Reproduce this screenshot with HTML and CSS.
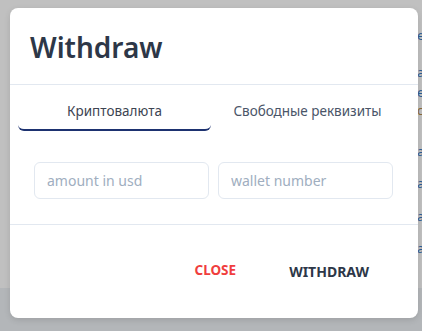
FILE: index.html
```html
<!DOCTYPE html>
<html lang="en">
<head>
<meta charset="utf-8">
<title>Withdraw</title>
<link rel="stylesheet" href="styles.css">
</head>
<body>
<div class="page">
  <div class="page-main">
    <div class="bg-lines">
      <span class="bg-line l1">ea</span>
      <span class="bg-line l2">ae</span>
      <span class="bg-line l3">ea</span>
      <span class="bg-line l4 alt">ca</span>
      <span class="bg-line l5">ae</span>
      <span class="bg-line l6">ae</span>
      <span class="bg-line l7">ae</span>
      <span class="bg-line l8">ae</span>
    </div>
  </div>
  <div class="page-footer"></div>
</div>

<div class="modal">
  <div class="modal-header">
    <h1 class="modal-title">Withdraw</h1>
  </div>
  <div class="tabs">
    <button class="tab active">Криптовалюта</button>
    <button class="tab">Свободные реквизиты</button>
  </div>
  <div class="fields">
    <input class="field" type="text" placeholder="amount in usd">
    <input class="field" type="text" placeholder="wallet number">
  </div>
  <div class="modal-footer">
    <button class="btn btn-close">CLOSE</button>
    <button class="btn btn-withdraw">WITHDRAW</button>
  </div>
</div>
</body>
</html>
```

FILE: styles.css
```css
html, body {
  margin: 0;
  padding: 0;
}
body {
  width: 422px;
  height: 331px;
  overflow: hidden;
  background: #c0c0c0;
  font-family: "Noto Sans", "Open Sans", sans-serif;
  position: relative;
}
.page {
  display: flex;
  flex-direction: column;
  height: 331px;
}
.page-main {
  height: 288px;
  background: #c0c0c0;
}
.page-footer {
  flex: 1;
  background: #b3b6b9;
}
.bg-lines {
  display: flex;
  flex-direction: column;
  padding-left: 417px;
  white-space: nowrap;
}
.bg-line {
  display: block;
  font-size: 13px;
  line-height: 14px;
  color: #2c5d95;
}
.bg-line.alt { color: #8a6a3a; }
.l1 { margin-top: 28px; }
.l2 { margin-top: 23px; }
.l3 { margin-top: 6px; }
.l4 { margin-top: 4px; }
.l5 { margin-top: 27px; }
.l6 { margin-top: 18px; }
.l7 { margin-top: 19px; }
.l8 { margin-top: 18px; }

.modal {
  position: absolute;
  left: 10px;
  top: 8px;
  width: 408px;
  height: 310px;
  background: #ffffff;
  border-radius: 8px;
  box-shadow: 0 2px 6px rgba(0, 0, 0, 0.12);
  display: flex;
  flex-direction: column;
}
.modal-header {
  height: 77px;
  padding: 2px 20px 0;
  box-sizing: border-box;
  display: flex;
  align-items: center;
  border-bottom: 1px solid #e2e8f0;
}
.modal-title {
  margin: 0;
  font-size: 28px;
  line-height: 36px;
  font-weight: 600;
  color: #2d3748;
}
.tabs {
  display: flex;
  margin: 0 14px 0 8px;
}
.tab {
  flex: 1;
  background: none;
  border: none;
  border-bottom: 2px solid transparent;
  border-radius: 0 0 6px 6px;
  padding: 16px 0 8px;
  font-family: inherit;
  font-size: 13.5px;
  line-height: 20px;
  color: #4a5568;
  cursor: pointer;
}
.tab.active {
  border-bottom-color: #1d3270;
  color: #3d4452;
}
.fields {
  display: flex;
  gap: 9px;
  padding: 31px 25px 25px 24px;
  border-bottom: 1px solid #e2e8f0;
}
.field {
  flex: 1;
  min-width: 0;
  height: 37px;
  box-sizing: border-box;
  border: 1px solid #e2e8f0;
  border-radius: 6px;
  padding: 0 12px;
  font-family: inherit;
  font-size: 14px;
  color: #2d3748;
  outline: none;
}
.field::placeholder {
  color: #a0aec0;
}
.modal-footer {
  flex: 1;
  display: flex;
  justify-content: flex-end;
  align-items: center;
  gap: 5px;
  padding: 0 25px 0 0;
}
.btn {
  background: none;
  border: none;
  padding: 8px 24px;
  font-family: inherit;
  font-weight: 700;
  line-height: 20px;
  cursor: pointer;
}
.btn-close {
  font-size: 13.5px;
  color: #f03e3e;
  margin-bottom: 3px;
}
.btn-withdraw {
  font-size: 14px;
  color: #2d3748;
}
```
